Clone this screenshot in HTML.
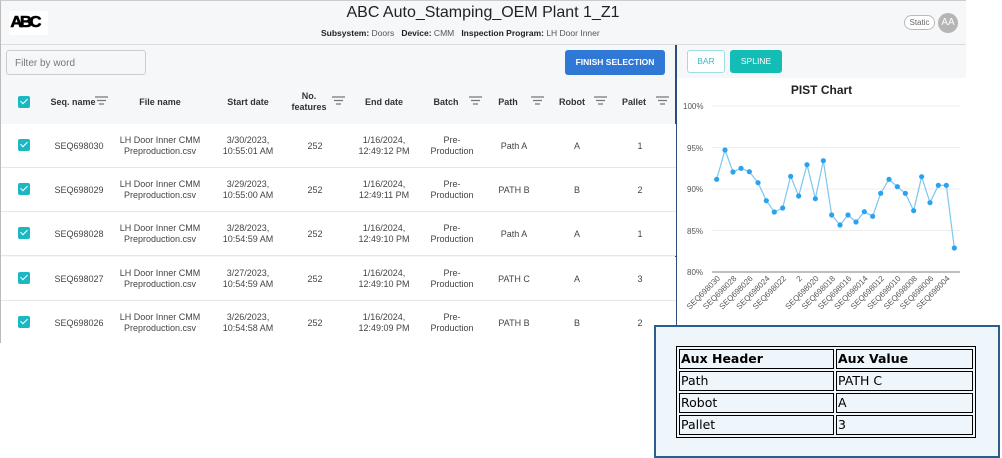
<!DOCTYPE html>
<html><head><style>
*{margin:0;padding:0;box-sizing:border-box}
body{width:1002px;height:458px;background:#fff;font-family:"Liberation Sans",Arial,sans-serif;position:relative;overflow:hidden}
.abs{position:absolute}
.app{left:0;top:0;width:966px;height:343px;background:#f6f7f9;border-left:1px solid #bbb;border-top:1px solid #ccc}
.c{position:absolute;text-align:center;font-size:9px;color:#444;line-height:11px;transform:translateX(-50%);white-space:nowrap}
.h{font-weight:bold;color:#333;font-size:9px}
.cb{position:absolute;left:18px;width:12px;height:12px;background:#1bb8c4;border-radius:2px}
.cb:after{content:"";position:absolute;left:4px;top:1px;width:3px;height:6px;border:solid #fff;border-width:0 1.5px 1.5px 0;transform:rotate(45deg)}
.row{position:absolute;left:1px;width:675px;height:44px;background:#fff;border-bottom:1px solid #e6e6e6}
table.aux{position:absolute;left:676px;top:346px;width:300px;border:1px solid #000;border-spacing:2px;font-family:"DejaVu Sans",sans-serif;font-size:12.5px}
table.aux td{border:1px solid #000;padding:0 1px;height:20px;line-height:18px}
</style></head><body>
<div class="abs app"></div>
<div class="abs" style="left:9px;top:11px;width:39px;height:24px;background:#fff"></div>
<div class="abs" style="left:11px;top:14px;font-weight:900;font-size:16px;letter-spacing:-2.5px;transform:scaleX(1.05);font-family:'Liberation Sans';color:#000;-webkit-text-stroke:0.6px #000">ABC</div>
<div class="abs" style="left:0;width:966px;top:4px;text-align:center;font-size:16px;color:#222">ABC Auto_Stamping_OEM Plant 1_Z1</div>
<div class="abs" style="left:321px;top:28px;font-size:8.5px;color:#555"><b style="color:#222">Subsystem:</b> Doors &nbsp;&nbsp;<b style="color:#222">Device:</b> CMM &nbsp;&nbsp;<b style="color:#222">Inspection Program:</b> LH Door Inner</div>
<div class="abs" style="left:904px;top:15px;width:31px;height:15px;border:1px solid #bbb;border-radius:8px;font-size:8px;color:#666;text-align:center;line-height:13px;background:#fff">Static</div>
<div class="abs" style="left:938px;top:13px;width:20px;height:20px;border-radius:50%;background:#b5b5b5;color:#fff;font-size:10px;text-align:center;line-height:20px">AA</div>
<div class="abs" style="left:1px;top:44px;width:965px;height:1px;background:#dcdcdc"></div>
<div class="abs" style="left:6px;top:50px;width:140px;height:25px;border:1px solid #ccc;border-radius:3px;background:#f6f7f9;font-size:10px;color:#777;padding:7px 0 0 8px">Filter by word</div>
<div class="abs" style="left:565px;top:50px;width:100px;height:25px;background:#2f78d6;border-radius:3px;color:#fff;font-size:8.5px;font-weight:bold;text-align:center;line-height:25px">FINISH SELECTION</div>
<div class="abs" style="left:675px;top:45px;width:2px;height:298px;background:#2a4d7a"></div>
<div class="cb" style="top:96px"></div>
<div class="c h" style="left:73px;top:97px">Seq. name</div>
<div class="c h" style="left:160px;top:97px">File name</div>
<div class="c h" style="left:248px;top:97px">Start date</div>
<div class="c h" style="left:309px;top:91px">No.<br>features</div>
<div class="c h" style="left:384px;top:97px">End date</div>
<div class="c h" style="left:446px;top:97px">Batch</div>
<div class="c h" style="left:508px;top:97px">Path</div>
<div class="c h" style="left:572px;top:97px">Robot</div>
<div class="c h" style="left:634px;top:97px">Pallet</div>
<svg class="abs" style="left:0;top:0" width="676" height="120"><g stroke="#777" stroke-width="1.2">
<path d="M95 97h13M97 100.5h9M99 104h5"/><path d="M332 97h13M334 100.5h9M336 104h5"/><path d="M469 97h13M471 100.5h9M473 104h5"/><path d="M531 97h13M533 100.5h9M535 104h5"/><path d="M594 97h13M596 100.5h9M598 104h5"/><path d="M656 97h13M658 100.5h9M660 104h5"/></g></svg>
<div class="row" style="top:124px"></div><div class="row" style="top:168px"></div><div class="row" style="top:212px"></div><div class="row" style="top:257px"></div><div class="row" style="top:301px;height:42px;border:none"></div>
<div id="rows"></div>
<div class="abs" style="left:677px;top:78px;width:289px;height:265px;background:#fff"></div>
<div class="abs" style="left:687px;top:50px;width:38px;height:23px;border:1px solid #9fdde0;border-radius:3px;background:#fff;color:#3bb8c0;font-size:8.5px;text-align:center;line-height:21px">BAR</div>
<div class="abs" style="left:730px;top:50px;width:52px;height:23px;background:#14bcb6;border-radius:3px;color:#fff;font-size:8.5px;text-align:center;line-height:23px">SPLINE</div>
<div class="abs" style="left:677px;width:289px;top:83px;text-align:center;font-weight:bold;font-size:12px;color:#222">PIST Chart</div>
<svg class="abs" style="left:670px;top:90px" width="300" height="240" font-family="Liberation Sans" font-size="8" fill="#555">
<g stroke="#eee"><path d="M42 16H290M42 57.5H290M42 99H290M42 140.5H290"/></g>
<path d="M42 182H290" stroke="#999" stroke-width="1.2"/>
<text x="13" y="19">100%</text><text x="17" y="61">95%</text><text x="17" y="102">90%</text><text x="17" y="144">85%</text><text x="17" y="185">80%</text>
<g id="pl"></g>
</svg>
<div class="abs" style="left:654px;top:325px;width:346px;height:133px;background:#eef5fb;border:2px solid #2b5d8f"></div>
<table class="aux">
<tr><td style="width:155px"><b>Aux Header</b></td><td><b>Aux Value</b></td></tr>
<tr><td>Path</td><td>PATH C</td></tr>
<tr><td>Robot</td><td>A</td></tr>
<tr><td>Pallet</td><td>3</td></tr>
</table>
<script>
var d=[["SEQ698030","3/30/2023,<br>10:55:01 AM","1/16/2024,<br>12:49:12 PM","Path A","A","1"],
["SEQ698029","3/29/2023,<br>10:55:00 AM","1/16/2024,<br>12:49:11 PM","PATH B","B","2"],
["SEQ698028","3/28/2023,<br>10:54:59 AM","1/16/2024,<br>12:49:10 PM","Path A","A","1"],
["SEQ698027","3/27/2023,<br>10:54:59 AM","1/16/2024,<br>12:49:10 PM","PATH C","A","3"],
["SEQ698026","3/26/2023,<br>10:54:58 AM","1/16/2024,<br>12:49:09 PM","PATH B","B","2"]];
var tops=[124,168,212,257,301],h="";
d.forEach(function(r,i){var t=tops[i]+22;
h+='<div class="cb" style="top:'+(t-7)+'px"></div>';
h+='<div class="c" style="left:79px;top:'+(t-5)+'px">'+r[0]+'</div>';
h+='<div class="c" style="left:160px;top:'+(t-11)+'px">LH Door Inner CMM<br>Preproduction.csv</div>';
h+='<div class="c" style="left:248px;top:'+(t-11)+'px">'+r[1]+'</div>';
h+='<div class="c" style="left:315px;top:'+(t-5)+'px">252</div>';
h+='<div class="c" style="left:384px;top:'+(t-11)+'px">'+r[2]+'</div>';
h+='<div class="c" style="left:452px;top:'+(t-11)+'px">Pre-<br>Production</div>';
h+='<div class="c" style="left:514px;top:'+(t-5)+'px">'+r[3]+'</div>';
h+='<div class="c" style="left:577px;top:'+(t-5)+'px">'+r[4]+'</div>';
h+='<div class="c" style="left:640px;top:'+(t-5)+'px">'+r[5]+'</div>';});
document.getElementById('rows').innerHTML=h;
var z=[[140,268],[165,180],[189,246],[213,235],[238,245],[264,278],[289,332],[313,366],[338,354],[362,259],[386,318],[411,224],[436,326],[460,212],[485,375],[510,405],[534,375],[558,396],[583,365],[608,379],[632,310],[657,268],[682,290],[706,310],[731,362],[755,260],[780,338],[805,286],[829,286],[853,474]];
var p="",c="",l="";z.forEach(function(q,i){var x=q[0]/3,y=q[1]/3;p+=(i?"L":"M")+x+" "+y;c+='<circle cx="'+x+'" cy="'+y+'" r="2.6" fill="#2aa3ee"/>';});
var labs=["SEQ698030","SEQ698028","SEQ698026","SEQ698024","SEQ698022","2","SEQ698020","SEQ698018","SEQ698016","SEQ698014","SEQ698012","SEQ698010","SEQ698008","SEQ698006","SEQ698004"];
labs.forEach(function(s,i){var x=z[i*2][0]/3+4;l+='<text x="'+x+'" y="189" text-anchor="end" transform="rotate(-45 '+x+' 189)">'+s+'</text>';});
document.getElementById('pl').innerHTML='<path d="'+p+'" fill="none" stroke="#7cc6f2" stroke-width="1.2"/>'+c+l;
</script>
</body></html>
